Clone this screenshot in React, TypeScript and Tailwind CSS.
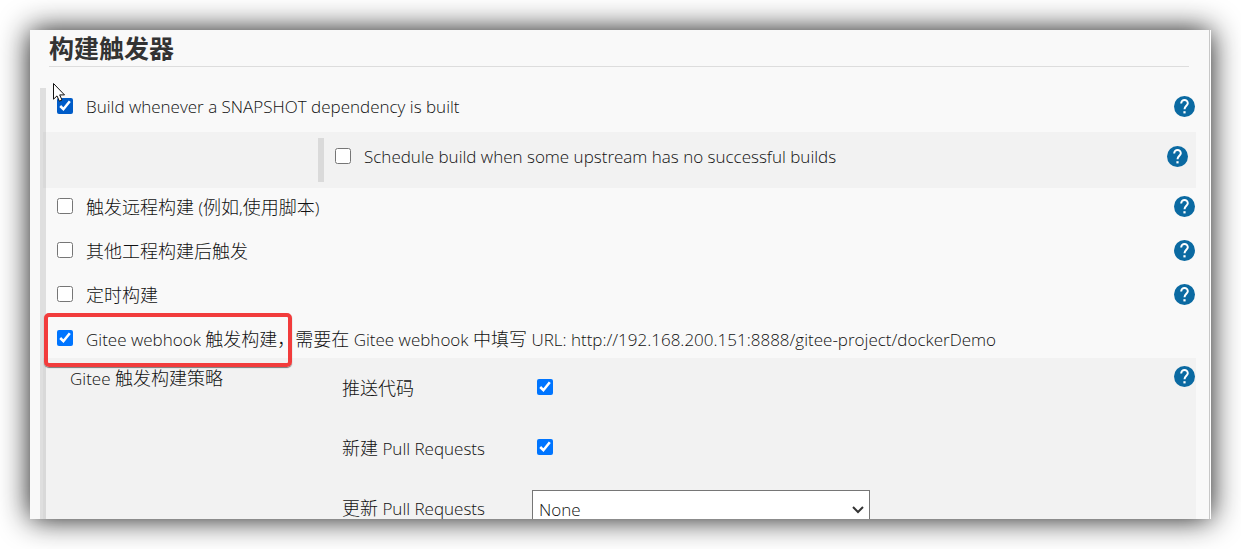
import React from "react";

function HelpButton({ topic }: { topic: string }) {
  return (
    <button type="button" aria-label={`Help: ${topic}`} className="h-[21px] w-[21px] shrink-0">
      <svg viewBox="0 0 21 21" className="block h-full w-full" aria-hidden="true">
        <circle cx="10.5" cy="10.5" r="10.5" fill="#0b6aa2" />
        <path d="M7.2 7.6 V7.2 A3.3 3.3 0 0 1 13.8 7.2 C13.8 9.6 10.5 10 10.5 13.3" fill="none" stroke="#fff" strokeWidth="2" />
        <rect x="9.4" y="15.2" width="2.2" height="2.2" fill="#fff" />
      </svg>
    </button>
  );
}

function Zh({ children }: { children: React.ReactNode }) {
  return (
    <span lang="zh-CN" className="text-[18px]">
      {children}
    </span>
  );
}

type OptionProps = {
  id: string;
  children: React.ReactNode;
  help?: string;
  checked?: boolean;
  highlighted?: boolean;
};

function Option({ id, children, help, checked = false, highlighted = false }: OptionProps) {
  return (
    <div className="flex h-9 w-full items-center">
      <input
        id={id}
        type="checkbox"
        defaultChecked={checked}
        className={`h-4 w-4 shrink-0 ${highlighted ? "accent-[#005cc8]" : ""}`}
      />
      <label htmlFor={id} className="ml-[13px] flex-1 pt-[2px] text-[17px] leading-6 whitespace-nowrap">
        {children}
      </label>
      {help && <HelpButton topic={help} />}
    </div>
  );
}

function Cursor() {
  return (
    <svg viewBox="0 0 12 19" className="absolute top-[53px] left-[23px] h-[19px] w-3" aria-hidden="true">
      <path d="M.5.5V16.2L4 12.9L6.4 18.2L9 17L6.7 11.9H11.5Z" fill="#fff" stroke="#111" />
    </svg>
  );
}

export default function App() {
  return (
    <div className="flex h-screen bg-white p-[30px] font-['Open_Sans','Noto_Sans_CJK_SC',sans-serif] font-light text-[#111]">
      <main className="relative flex-1 overflow-hidden border-r border-white bg-[#f9f9f9] shadow-[0_0_28px_rgba(0,0,0,0.92)]">
        <div className="min-h-full border-r border-[#c8c8c8] pr-[13px] pl-[13px]">
          <h1 className="mr-[7px] ml-[6px] h-[37px] border-b border-[#ddd] text-[25px] leading-[37px] font-bold text-[#333]">构建触发器</h1>
          <form className="relative pt-[21px]">
            <div className="h-11 pr-px pl-[14px]">
              <Option id="snapshot" help="SNAPSHOT" checked highlighted>
                Build whenever a SNAPSHOT dependency is built
              </Option>
            </div>
            <div className="flex h-14 bg-[#f2f2f2] py-[6px] pr-2 pl-[275px]">
              <div className="flex h-11 flex-1 border-l-6 border-[#dadada] pl-[11px]">
                <Option id="upstream" help="upstream">
                  Schedule build when some upstream has no successful builds
                </Option>
              </div>
            </div>
            <div className="flex flex-col gap-2 pr-px pl-[14px]">
              <Option id="remote" help="触发远程构建">
                <Zh>触发远程构建</Zh> (<Zh>例如</Zh>,<Zh>使用脚本</Zh>)
              </Option>
              <Option id="after" help="其他工程构建后触发">
                <Zh>其他工程构建后触发</Zh>
              </Option>
              <Option id="timer" help="定时构建">
                <Zh>定时构建</Zh>
              </Option>
              <Option id="gitee" checked>
                Gitee webhook <Zh>触发构建{"\uFF0C"}需要在</Zh> Gitee webhook <Zh>中填写</Zh> URL:
                {" "}http://192.168.200.151:8888/gitee-project/dockerDemo
              </Option>
            </div>
            <div className="mt-[2px] flex items-start bg-[#f2f2f2] pr-px pl-[27px]">
              <h2 className="w-[272px] pt-2 text-[17px] leading-6">
                Gitee <Zh>触发构建策略</Zh>
              </h2>
              <div className="grid flex-1 grid-cols-[190px_338px] pt-[10px] text-[17px] leading-10">
                <label htmlFor="push" className="h-15">
                  <Zh>推送代码</Zh>
                </label>
                <input id="push" type="checkbox" defaultChecked className="mt-[11px] ml-[5px] h-4 w-4" />
                <label htmlFor="create" className="h-15">
                  <Zh>新建</Zh> Pull Requests
                </label>
                <input id="create" type="checkbox" defaultChecked className="mt-[11px] ml-[5px] h-4 w-4" />
                <label htmlFor="update" className="h-15">
                  <Zh>更新</Zh> Pull Requests
                </label>
                <div className="relative mt-[2px] h-10">
                  <select id="update" className="h-10 w-full appearance-none border border-[#767676] bg-white px-[6px] text-[17px] leading-9">
                    <option>None</option>
                  </select>
                  <svg viewBox="0 0 12 8" className="pointer-events-none absolute top-4 right-[6px] h-2 w-3" aria-hidden="true">
                    <path d="M1 1L6 6L11 1" fill="none" stroke="#333" strokeWidth="2" />
                  </svg>
                </div>
              </div>
              <div className="pt-2">
                <HelpButton topic="Gitee 触发构建策略" />
              </div>
            </div>
            <div className="pointer-events-none absolute top-[21px] bottom-0 -left-[3px] w-[6px] bg-black/10" />
          </form>
        </div>
        <div className="pointer-events-none absolute top-[283px] left-[14px] h-[54px] w-[248px] rounded-[5px] border-4 border-[#f23c3c] shadow-[0_1px_1px_#777]" />
        <Cursor />
      </main>
    </div>
  );
}
